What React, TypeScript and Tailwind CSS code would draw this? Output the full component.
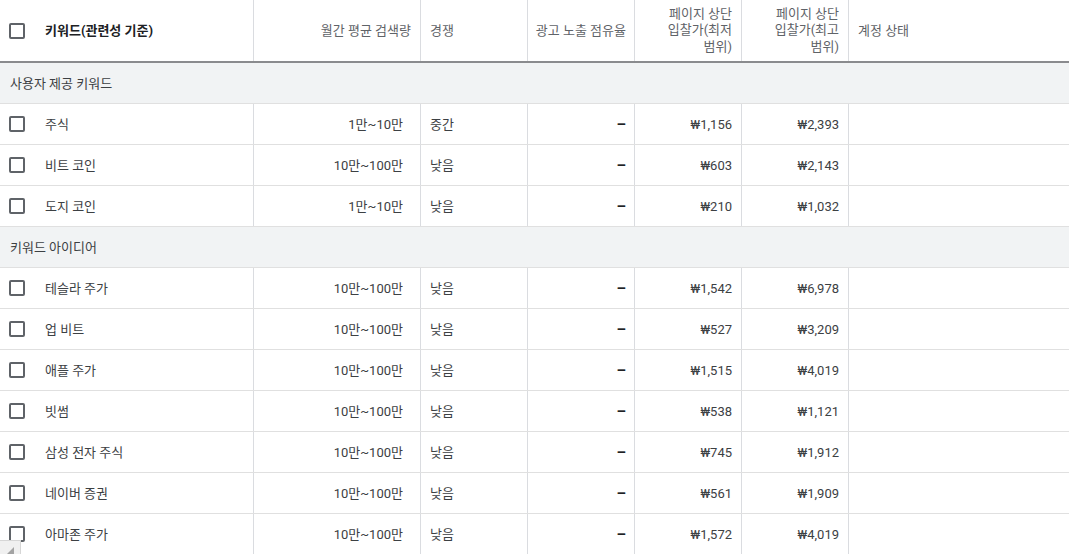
import React from "react";

const font = { fontFamily: 'Roboto, "Noto Sans CJK KR", "Noto Sans", sans-serif' };

type Row = { kw: string; vol: string; comp: string; low: string; high: string };

const provided: Row[] = [
  { kw: "주식", vol: "1만~10만", comp: "중간", low: "₩1,156", high: "₩2,393" },
  { kw: "비트 코인", vol: "10만~100만", comp: "낮음", low: "₩603", high: "₩2,143" },
  { kw: "도지 코인", vol: "1만~10만", comp: "낮음", low: "₩210", high: "₩1,032" },
];

const ideas: Row[] = [
  { kw: "테슬라 주가", vol: "10만~100만", comp: "낮음", low: "₩1,542", high: "₩6,978" },
  { kw: "업 비트", vol: "10만~100만", comp: "낮음", low: "₩527", high: "₩3,209" },
  { kw: "애플 주가", vol: "10만~100만", comp: "낮음", low: "₩1,515", high: "₩4,019" },
  { kw: "빗썸", vol: "10만~100만", comp: "낮음", low: "₩538", high: "₩1,121" },
  { kw: "삼성 전자 주식", vol: "10만~100만", comp: "낮음", low: "₩745", high: "₩1,912" },
  { kw: "네이버 증권", vol: "10만~100만", comp: "낮음", low: "₩561", high: "₩1,909" },
  { kw: "아마존 주가", vol: "10만~100만", comp: "낮음", low: "₩1,572", high: "₩4,019" },
];

function Checkbox() {
  return <div className="w-4 h-4 border-2 border-[#5f6368] rounded-[2px] shrink-0" />;
}

function DataRow({ r }: { r: Row }) {
  return (
    <div className="flex h-[41px] border-b border-[#e0e0e0] text-[13px] text-[#3c4043]">
      <div className="w-[254px] shrink-0 border-r border-[#dadce0] flex items-center pl-[9px]">
        <Checkbox />
        <span className="ml-[20px] pt-[2px]">{r.kw}</span>
      </div>
      <div className="w-[167px] shrink-0 border-r border-[#dadce0] flex items-center justify-end pr-[17px] pt-[2px]">{r.vol}</div>
      <div className="w-[107px] shrink-0 border-r border-[#dadce0] flex items-center pl-[9px] pt-[2px]">{r.comp}</div>
      <div className="w-[107px] shrink-0 border-r border-[#dadce0] flex items-center justify-end pr-[8px] text-[15px] font-bold text-[#202124]">
        –
      </div>
      <div className="w-[107px] shrink-0 border-r border-[#dadce0] flex items-center justify-end pr-[9px] pt-[2px]">{r.low}</div>
      <div className="w-[107px] shrink-0 border-r border-[#dadce0] flex items-center justify-end pr-[9px] pt-[2px]">{r.high}</div>
      <div className="flex-1" />
    </div>
  );
}

function SectionRow({ label }: { label: string }) {
  return (
    <div className="h-[41px] bg-[#f1f3f4] border-b border-[#e0e0e0] flex items-center pl-[10px] pt-[2px] text-[13px] text-[#3c4043]">
      {label}
    </div>
  );
}

export default function App() {
  return (
    <div className="relative w-[1069px] h-[554px] overflow-hidden bg-white" style={font}>
      {/* header */}
      <div className="flex h-[63px] border-b-2 border-[#8a8b8e] text-[13px] text-[#5f6368]">
        <div className="w-[254px] shrink-0 border-r border-[#dadce0] flex items-center pl-[9px]">
          <Checkbox />
          <span className="ml-[20px] font-bold text-[#202124]">키워드(관련성 기준)</span>
        </div>
        <div className="w-[167px] shrink-0 border-r border-[#dadce0] flex items-center justify-end pr-[9px]">월간 평균 검색량</div>
        <div className="w-[107px] shrink-0 border-r border-[#dadce0] flex items-center pl-[9px]">경쟁</div>
        <div className="w-[107px] shrink-0 border-r border-[#dadce0] flex items-center justify-end pr-[8px]">광고 노출 점유율</div>
        <div className="w-[107px] shrink-0 border-r border-[#dadce0] flex items-center justify-end pr-[9px] text-right leading-[16.5px]">
          <span>페이지 상단<br />입찰가(최저<br />범위)</span>
        </div>
        <div className="w-[107px] shrink-0 border-r border-[#dadce0] flex items-center justify-end pr-[9px] text-right leading-[16.5px]">
          <span>페이지 상단<br />입찰가(최고<br />범위)</span>
        </div>
        <div className="flex-1 flex items-center pl-[9px]">계정 상태</div>
      </div>

      <SectionRow label="사용자 제공 키워드" />
      {provided.map((r) => (
        <DataRow key={r.kw} r={r} />
      ))}
      <SectionRow label="키워드 아이디어" />
      {ideas.map((r) => (
        <DataRow key={r.kw} r={r} />
      ))}

      {/* scroll corner overlay */}
      <div className="absolute left-0 bottom-0 w-[21px] h-[14px] bg-[#f0f0f0] border-t border-r border-[#d6d6d6] flex items-end justify-start">
        <svg width="12" height="12" viewBox="0 0 12 12" className="ml-[4px]">
          <path d="M3 12 L10 5 L10 12 Z" fill="#a3a3a3" />
        </svg>
      </div>
    </div>
  );
}
